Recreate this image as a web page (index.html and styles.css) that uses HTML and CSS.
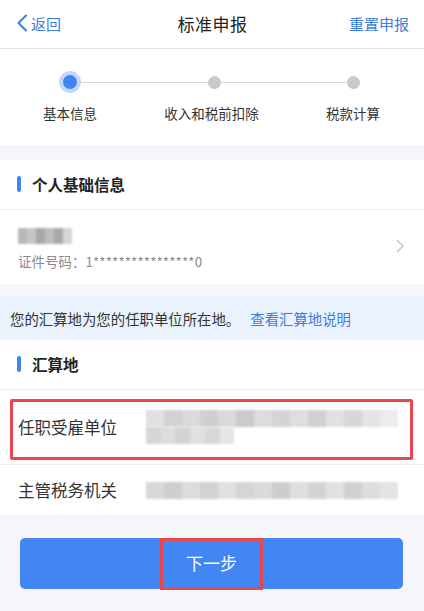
FILE: index.html
```html
<!DOCTYPE html>
<html lang="zh">
<head>
<meta charset="utf-8">
<link rel="stylesheet" href="styles.css">
</head>
<body>
<div class="page">
  <header class="nav">
    <div class="nav-back">
      <svg class="back-icon" width="12" height="18" viewBox="0 0 12 18"><path d="M10 1.5 L2.5 9 L10 16.5" fill="none" stroke="#3b7ddd" stroke-width="2" stroke-linecap="round" stroke-linejoin="round"/></svg>
      <span>返回</span>
    </div>
    <div class="nav-title">标准申报</div>
    <div class="nav-reset">重置申报</div>
  </header>

  <section class="steps">
    <div class="track">
      <span class="dot dot-active"></span>
      <span class="line"></span>
      <span class="dot"></span>
      <span class="line"></span>
      <span class="dot"></span>
    </div>
    <div class="labels">
      <span class="label">基本信息</span>
      <span class="label">收入和税前扣除</span>
      <span class="label">税款计算</span>
    </div>
  </section>

  <section class="card card-first">
    <div class="card-title"><span class="bar"></span>个人基础信息</div>
    <div class="person">
      <div class="person-info">
        <div class="blur blur-name">
          <i style="background:#b9b9bb"></i><i style="background:#c6c6c8"></i><i style="background:#a9a9ab"></i><i style="background:#bdbdbf"></i><i style="background:#a8a8aa"></i><i style="background:#d6d6d8"></i>
        </div>
        <div class="id-no">证件号码：1****************0</div>
      </div>
      <svg class="chev" width="9" height="14" viewBox="0 0 9 14"><path d="M1.5 1.5 L7 7 L1.5 12.5" fill="none" stroke="#c9c9cc" stroke-width="1.6" stroke-linecap="round" stroke-linejoin="round"/></svg>
    </div>
  </section>

  <div class="notice">您的汇算地为您的任职单位所在地。<span class="link">查看汇算地说明</span></div>

  <section class="card">
    <div class="card-title"><span class="bar"></span>汇算地</div>
    <div class="field field-tall">
      <div class="field-label">任职受雇单位</div>
      <div class="field-value">
        <div class="blur blur-line">
          <i style="background:#e0e0e2"></i><i style="background:#d2d2d4"></i><i style="background:#dadadc"></i><i style="background:#cfcfd1"></i><i style="background:#d9d9db"></i><i style="background:#cbcbcd"></i><i style="background:#dcdcde"></i><i style="background:#d4d4d6"></i><i style="background:#dedee0"></i><i style="background:#d0d0d2"></i><i style="background:#e2e2e4"></i><i style="background:#d6d6d8"></i><i style="background:#e4e4e6"></i><i style="background:#ececee"></i>
        </div>
        <div class="blur blur-line blur-short">
          <i style="background:#d6d6d8"></i><i style="background:#dddddf"></i><i style="background:#d3d3d5"></i><i style="background:#e0e0e2"></i><i style="background:#d8d8da"></i><i style="background:#e6e6e8"></i>
        </div>
      </div>
      <div class="highlight"></div>
    </div>
    <div class="field">
      <div class="field-label">主管税务机关</div>
      <div class="field-value">
        <div class="blur blur-line">
          <i style="background:#d8d8da"></i><i style="background:#cfcfd1"></i><i style="background:#dcdcde"></i><i style="background:#d2d2d4"></i><i style="background:#e0e0e2"></i><i style="background:#d5d5d7"></i><i style="background:#dadadc"></i><i style="background:#cdcdcf"></i><i style="background:#dfdfe1"></i><i style="background:#d3d3d5"></i><i style="background:#e1e1e3"></i><i style="background:#d0d0d2"></i><i style="background:#dcdcde"></i><i style="background:#e4e4e6"></i>
        </div>
      </div>
    </div>
  </section>

  <div class="actions">
    <button class="next"><span class="next-text">下一步</span></button>
  </div>
</div>
</body>
</html>
```

FILE: styles.css
```css
* { box-sizing: border-box; margin: 0; padding: 0; }
html, body { background: #f4f6fa; }
body {
  font-family: "Noto Sans CJK SC", "Noto Sans", sans-serif;
  color: #222;
  width: 424px;
  height: 611px;
  overflow: hidden;
}
.page { display: flex; flex-direction: column; }

.nav {
  height: 49px;
  background: #fff;
  border-bottom: 1px solid #e4e4e6;
  display: grid;
  grid-template-columns: 1fr auto 1fr;
  align-items: center;
  padding: 0 15px 2px 16px;
}
.nav-back { display: flex; align-items: center; gap: 3px; color: #3b7ddd; font-size: 15px; }
.back-icon { display: block; }
.nav-title { font-size: 17px; color: #222; letter-spacing: 0.5px; }
.nav-reset { justify-self: end; color: #3b7ddd; font-size: 15px; }

.steps {
  background: #fff;
  height: 96px;
  padding-top: 22px;
}
.track {
  display: flex;
  align-items: center;
  padding: 0 64px 0 59px;
  height: 22px;
}
.dot {
  width: 13px; height: 13px;
  border-radius: 50%;
  background: #c9c9cd;
  flex: none;
}
.dot-active {
  width: 22px; height: 22px;
  background: #3f84f5;
  border: 4px solid #c2d9fb;
}
.line { flex: 1; height: 1px; background: #d6d6d8; }
.labels {
  display: flex;
  justify-content: space-between;
  padding: 0 44px 0 43px;
  margin-top: 10px;
  font-size: 13.5px;
  color: #333;
  line-height: 20px;
}

.card { background: #fff; }
.card-first { margin-top: 15px; }
.card-title {
  height: 50px;
  border-bottom: 1px solid #ececee;
  display: flex;
  align-items: center;
  padding-left: 17px;
  font-size: 15.5px;
  font-weight: 700;
  color: #222;
  padding-bottom: 2px;
}
.bar {
  width: 4px; height: 16px;
  border-radius: 2px;
  background: #3f84f5;
  margin-right: 11px;
}
.person {
  height: 74px;
  display: flex;
  align-items: center;
  justify-content: space-between;
  padding: 0 19px 0 18px;
}
.person-info { display: flex; flex-direction: column; gap: 9px; padding-top: 2px; }
.blur { display: flex; filter: blur(1.2px); }
.blur i { display: block; flex: 1; }
.blur-name { width: 54px; height: 16px; }
.id-no { font-size: 13.4px; color: #8a8a8e; line-height: 16px; letter-spacing: 0.1px; }
.chev { display: block; margin-top: -2px; }

.notice {
  margin-top: 12px;
  height: 44px;
  background: #eaf3fd;
  display: flex;
  align-items: center;
  padding-left: 10px;
  font-size: 14.4px;
  color: #333;
}
.link { color: #3b7ddd; margin-left: 10px; }

.field {
  position: relative;
  height: 50px;
  display: flex;
  align-items: center;
  padding: 0 26px 0 18px;
  border-bottom: 1px solid #ececee;
}
.field:last-child { border-bottom: none; }
.field-tall { height: 75px; }
.field-label { width: 128px; flex: none; font-size: 16.5px; color: #333; }
.field-value { flex: 1; display: flex; flex-direction: column; }
.blur-line { height: 17px; width: 100%; }
.blur-short { width: 35%; }
.highlight {
  position: absolute;
  left: 10px; right: 11px; top: 9px; bottom: 4px;
  border: 3px solid #e8474d;
  border-radius: 2px;
}

.actions { padding: 23px 21px 0 20px; }
.next {
  width: 100%;
  height: 51px;
  background: #4286f4;
  border: none;
  border-radius: 5px;
  display: flex;
  justify-content: center;
  align-items: center;
  font-family: inherit;
}
.next-text {
  width: 103px;
  height: 52px;
  border: 3px solid #e8474d;
  display: flex;
  align-items: center;
  justify-content: center;
  color: #fff;
  font-size: 17px;
  padding-bottom: 2px;
}
```
